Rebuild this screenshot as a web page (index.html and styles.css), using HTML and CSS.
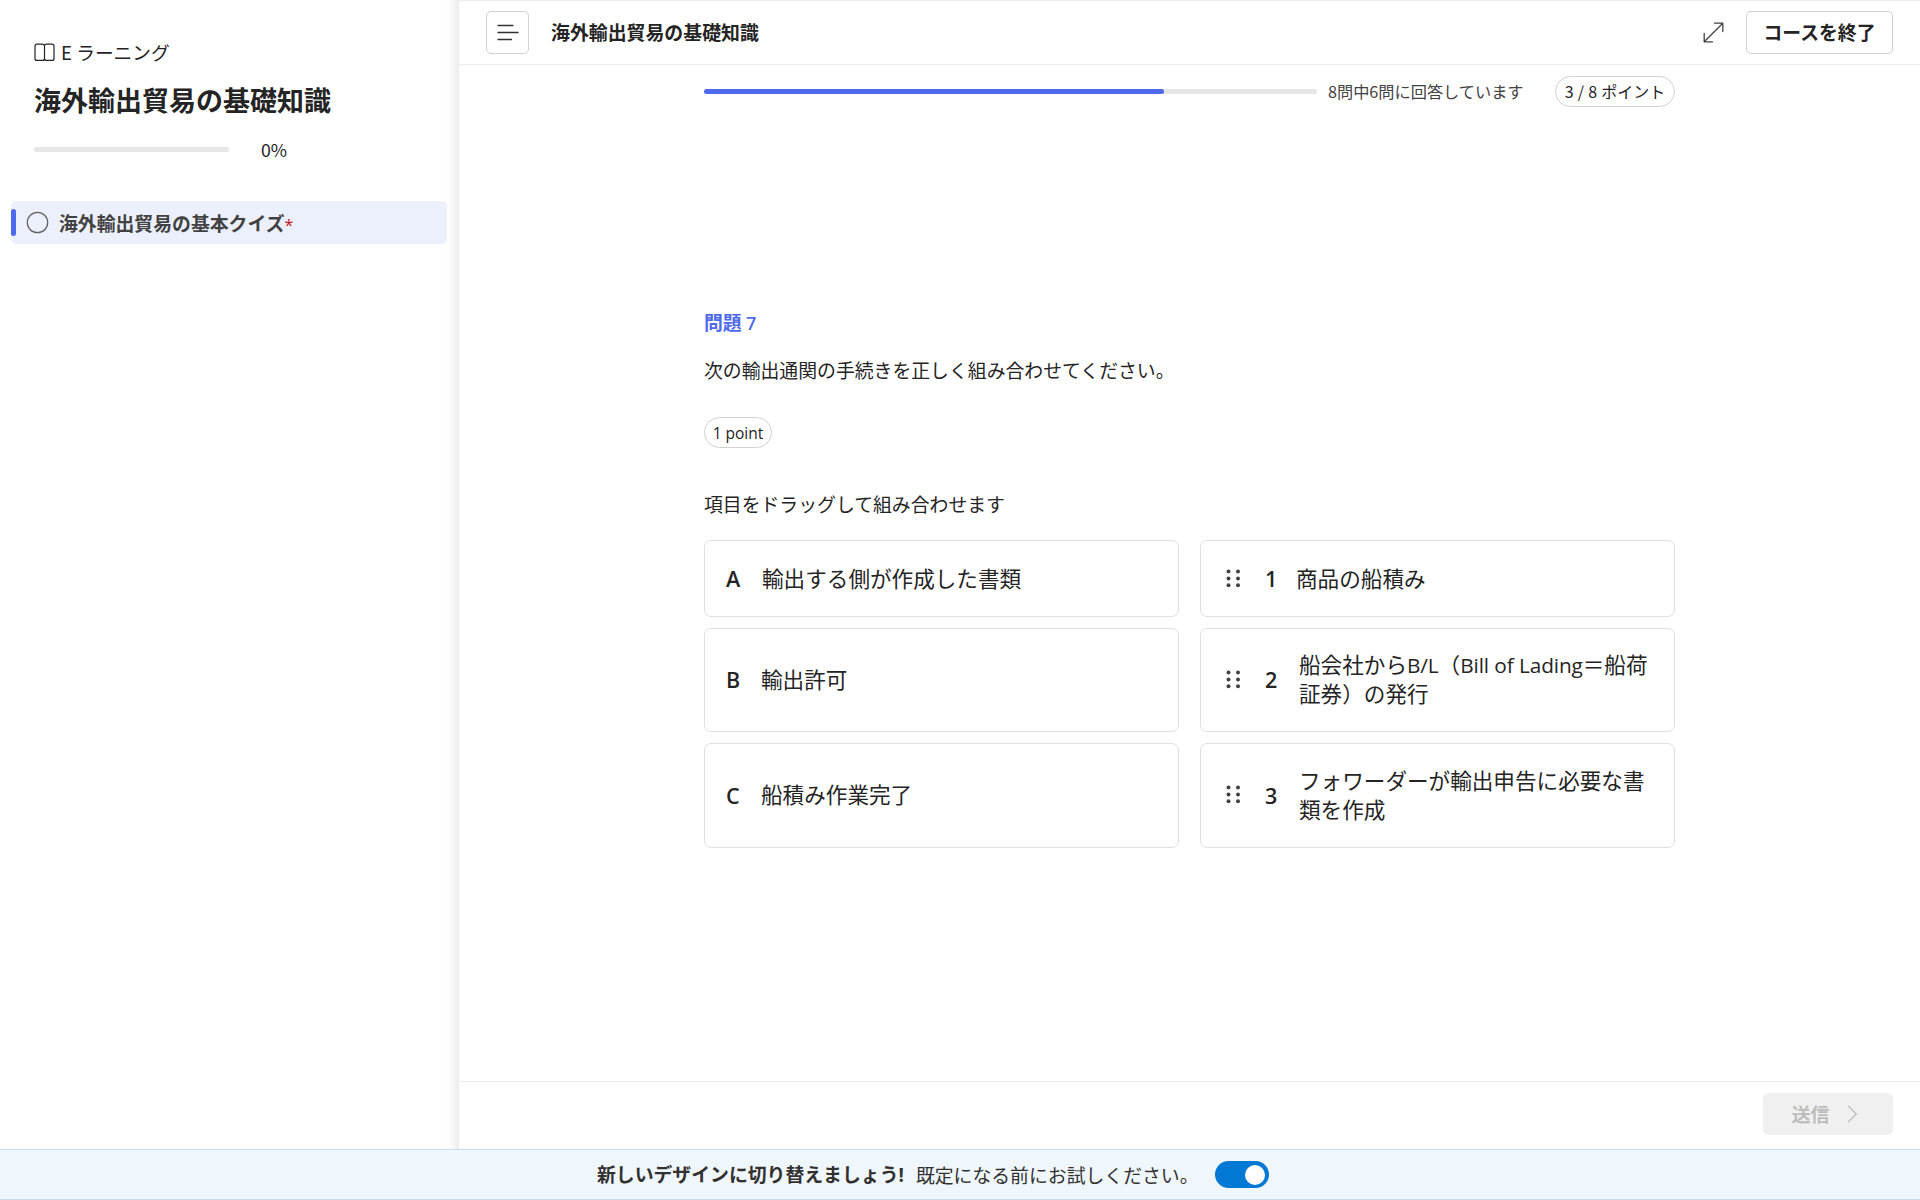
FILE: index.html
```html
<!DOCTYPE html>
<html lang="ja">
<head>
<meta charset="utf-8">
<title>海外輸出貿易の基礎知識</title>
<link rel="stylesheet" href="styles.css">
</head>
<body>
<div class="app">
  <aside class="sidebar">
    <div class="eyebrow">
      <svg class="book" width="21" height="19" viewBox="0 0 21 19" fill="none" stroke="#242424" stroke-width="1.2"><path d="M10.5 3.2C10.5 1.8 9.6 1.2 8.5 1.2H3C1.8 1.2 1 2 1 3.2v12.2c0 1.2.8 2 2 2h5.5c1.1 0 2-.6 2-2zM10.500 3.200c0-1.400.9-2 2-2H18c1.200 0 2 .8 2 2v12.200c0 1.200-.8 2-2 2h-5.500c-1.100 0-2-.6-2-2z"/></svg>
      <span class="eyebrow-text">E ラーニング</span>
    </div>
    <h1 class="course-title">海外輸出貿易の基礎知識</h1>
    <div class="course-progress"><div class="track"></div><span>0%</span></div>
    <div class="nav-item">
      <span class="marker"></span>
      <svg class="ring" width="23" height="23" viewBox="0 0 23 23"><circle cx="11.500" cy="11.500" r="10.200" fill="none" stroke="#616161" stroke-width="1.200"/></svg>
      <span class="nav-label">海外輸出貿易の基本クイズ<span class="required latin">*</span></span>
    </div>
  </aside>
  <main class="main">
    <header class="topbar">
      <button class="menu-button"><svg width="22" height="17" viewBox="0 0 22 17" stroke="#333" stroke-width="1.300" stroke-linecap="round"><path d="M1 1.500h15M1 8.500h20M1 15.500h13.500"/></svg></button>
      <h2 class="topbar-title">海外輸出貿易の基礎知識</h2>
      <svg class="expand" width="21" height="21" viewBox="0 0 21 21" fill="none" stroke="#424242" stroke-width="1.300" stroke-linecap="round" stroke-linejoin="round"><path d="M11.500 1.200h8.300v8.300M19.800 1.200L1.200 19.800M1.200 11.500v8.300h8.300"/></svg>
      <button class="finish-button">コースを終了</button>
    </header>
    <section class="content">
      <div class="quiz-status">
        <div class="quiz-track"><div class="quiz-fill" style="width:75%"></div></div>
        <span class="answered">8問中6問に回答しています</span>
        <span class="pill score">3 / 8 ポイント</span>
      </div>
      <div class="question">
        <h3 class="question-number">問題 <span class="latin">7</span></h3>
        <p class="question-text">次の輸出通関の手続きを正しく組み合わせてください。</p>
        <span class="pill point latin">1 point</span>
        <p class="hint">項目をドラッグして組み合わせます</p>
        <div class="match-grid">
          <div class="card"><b class="key latin">A</b><span class="label">輸出する側が作成した書類</span></div>
          <div class="card drag"><svg class="grip" width="15" height="19" viewBox="0 0 15 19" fill="#424242"><circle cx="2.500" cy="2.500" r="2"/><circle cx="12" cy="2.500" r="2"/><circle cx="2.500" cy="9.500" r="2"/><circle cx="12" cy="9.500" r="2"/><circle cx="2.500" cy="16.300" r="2"/><circle cx="12" cy="16.300" r="2"/></svg><b class="key latin">1</b><span class="label">商品の船積み</span></div>
          <div class="card tall"><b class="key latin">B</b><span class="label">輸出許可</span></div>
          <div class="card tall drag"><svg class="grip" width="15" height="19" viewBox="0 0 15 19" fill="#424242"><circle cx="2.500" cy="2.500" r="2"/><circle cx="12" cy="2.500" r="2"/><circle cx="2.500" cy="9.500" r="2"/><circle cx="12" cy="9.500" r="2"/><circle cx="2.500" cy="16.300" r="2"/><circle cx="12" cy="16.300" r="2"/></svg><b class="key latin">2</b><span class="label">船会社から<span class="latin">B/L</span>（<span class="latin">Bill of Lading</span>＝船荷<br>証券）の発行</span></div>
          <div class="card tall"><b class="key latin">C</b><span class="label">船積み作業完了</span></div>
          <div class="card tall drag"><svg class="grip" width="15" height="19" viewBox="0 0 15 19" fill="#424242"><circle cx="2.500" cy="2.500" r="2"/><circle cx="12" cy="2.500" r="2"/><circle cx="2.500" cy="9.500" r="2"/><circle cx="12" cy="9.500" r="2"/><circle cx="2.500" cy="16.300" r="2"/><circle cx="12" cy="16.300" r="2"/></svg><b class="key latin">3</b><span class="label">フォワーダーが輸出申告に必要な書<br>類を作成</span></div>
        </div>
      </div>
    </section>
    <footer class="actions">
      <button class="submit" disabled>送信<svg width="11" height="18" viewBox="0 0 11 18" fill="none" stroke="#bdbdbd" stroke-width="1.300" stroke-linecap="round" stroke-linejoin="round"><path d="M1.500 1.300L9.300 9l-7.800 7.700"/></svg></button>
    </footer>
  </main>
</div>
<div class="banner">
  <b>新しいデザインに切り替えましょう<span class="latin">!</span></b>
  <span class="banner-note">既定になる前にお試しください。</span>
  <span class="toggle"><span class="knob"></span></span>
</div>
</body>
</html>
```
FILE: styles.css
```css
* { box-sizing: border-box; }
body {
  margin: 0;
  width: 1920px;
  height: 1200px;
  overflow: hidden;
  display: flex;
  flex-direction: column;
  background: #fff;
  color: #242424;
  font: 18.85px/28px "Noto Sans CJK JP", sans-serif;
}
h1, h2, h3, p { margin: 0; }
button { font: inherit; color: inherit; background: #fff; padding: 0; }
svg { display: block; flex: none; }
.latin { font-family: "Open Sans", "Noto Sans CJK JP", sans-serif; }

.app { height: 1149px; display: flex; }
.sidebar {
  width: 459px;
  flex: none;
  padding: 38px 12px 0 11px;
  background: linear-gradient(to right, #fff 446px, #f8f8f8 453px, #ececec 459px);
}
.eyebrow { display: flex; align-items: center; gap: 6px; height: 28px; padding-left: 23px; }
.eyebrow-text { font-size: 18.700px; }
.course-title { margin-top: 14px; padding-left: 23px; font-size: 27px; line-height: 40px; font-weight: 700; }
.course-progress { display: flex; align-items: center; height: 28px; margin-top: 15px; padding-left: 23px; font-size: 17.700px; }
.track { width: 195px; height: 5px; margin-right: 32px; border-radius: 3px; background: #e6e6e6; }
.nav-item {
  display: flex;
  align-items: center;
  height: 43px;
  margin-top: 38px;
  border-radius: 5px;
  background: #ebf0fc;
  color: #424242;
  font-weight: 700;
}
.marker { width: 5px; height: 27px; border-radius: 3px; background: #4f6bed; }
.ring { margin: 0 10px; }
.nav-label { line-height: 27px; }
.required { color: #c50f1f; font-weight: 400; font-size: 16px; line-height: 1; }

.main { flex: 1; display: flex; flex-direction: column; }
.topbar {
  display: flex;
  align-items: center;
  height: 65px;
  padding: 0 27px;
  border-top: 1px solid #ededed;
  border-bottom: 1px solid #ededed;
}
.menu-button, .finish-button { height: 43px; border: 1px solid #d1d1d1; border-radius: 5px; }
.menu-button { width: 43px; display: grid; place-items: center; padding-bottom: 1px; }
.topbar-title { margin-left: 22px; padding-bottom: 1px; font-size: 18.900px; font-weight: 700; }
.expand { margin-left: auto; margin-right: 22px; }
.finish-button { width: 147px; padding-bottom: 2px; font-weight: 700; }

.content { flex: 1; padding: 11px 245px 0; }
.quiz-status { display: flex; align-items: center; height: 31px; }
.quiz-track { width: 613px; height: 5px; border-radius: 3px; background: #e6e6e6; }
.quiz-fill { height: 5px; border-radius: 3px; background: #4f6bed; }
.answered { margin-left: 11px; padding-bottom: 2px; color: #424242; font-size: 16.200px; }
.pill {
  display: inline-flex;
  align-items: center;
  justify-content: center;
  height: 31px;
  border: 1px solid #d1d1d1;
  border-radius: 16px;
  font-size: 16px;
  white-space: nowrap;
}
.score { width: 120px; margin-left: auto; padding-bottom: 2px; word-spacing: .5px; }
.question { padding-top: 201px; }
.question-number { color: #4f6bed; font-size: 18.850px; font-weight: 700; height: 28px; }
.question-number .latin { font-weight: 600; font-size: 18px; }
.question-text { height: 28px; margin-top: 20px; }
.point { width: 68px; margin-top: 33px; font-size: 15.500px; display: flex; }
.hint { height: 28px; margin-top: 42px; }
.match-grid {
  display: grid;
  grid-template-columns: 475px 475px;
  grid-template-rows: 77px 104px 105px;
  gap: 11px 21px;
  margin-top: 22px;
}
.card {
  display: flex;
  align-items: center;
  padding: 0 21px;
  border: 1px solid #e0e0e0;
  border-radius: 7px;
  font-size: 21.600px;
  line-height: 29px;
  white-space: nowrap;
}
.label { padding-bottom: 2px; }
.tall .label { padding-bottom: 4px; }
.tall .grip { margin-bottom: 2px; }
.key { width: 36px; font-size: 21.500px; font-weight: 600; }
.tall .key { width: 35px; padding-bottom: 1px; }
.drag { padding-left: 25px; }
.drag .key { width: 31px; margin-left: 24px; }
.drag.tall .key { width: 34px; }
.card .latin:not(.key) { font-size: 20.800px; letter-spacing: -.1px; line-height: 1; }

.actions { display: flex; justify-content: flex-end; height: 68px; padding: 11px 27px 0; border-top: 1px solid #ededed; }
.submit {
  display: flex;
  align-items: center;
  justify-content: center;
  gap: 18px;
  width: 130px;
  height: 42px;
  border: 0;
  padding-right: 6px;
  border-radius: 5px;
  background: #f0f0f0;
  color: #bdbdbd;
  font-weight: 700;
}

.banner {
  display: flex;
  align-items: center;
  height: 51px;
  padding-left: 597px;
  border-top: 1px solid #c7dced;
  border-bottom: 1px solid #c7dced;
  background: #eff6fc;
  color: #323130;
}
.banner-note { margin-left: 12px; }
.toggle { display: flex; justify-content: flex-end; align-items: center; width: 54px; height: 27px; margin-left: 16px; padding-right: 4px; border-radius: 14px; background: #0078d4; }
.knob { width: 20px; height: 20px; border-radius: 50%; background: #fff; }
```
